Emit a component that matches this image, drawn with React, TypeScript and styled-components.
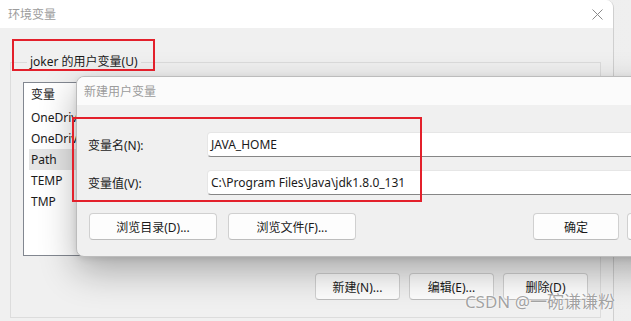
import styled, { createGlobalStyle } from "styled-components";

const GlobalStyle = createGlobalStyle`
  html, body {
    margin: 0;
    padding: 0;
    background: #ececec;
  }
  * {
    box-sizing: border-box;
  }
`;

const Page = styled.div`
  position: relative;
  width: 631px;
  height: 321px;
  overflow: hidden;
  display: flex;
  background: linear-gradient(90deg, #e2e2e2, #efefef);
  font-family: "Segoe UI", "Noto Sans", "Noto Sans CJK SC", sans-serif;
  font-size: 12px;
  color: #1a1a1a;
`;

const Window = styled.section`
  width: 614px;
  flex-shrink: 0;
  display: flex;
  flex-direction: column;
  background: #f0f0f0;
  border-right: 1px solid #cfcfcf;
  border-top-right-radius: 8px;
  overflow: hidden;
`;

const TitleBar = styled.header`
  height: 28px;
  flex-shrink: 0;
  display: flex;
  align-items: center;
  justify-content: space-between;
  padding: 0 10px 0 8px;
  background: #ffffff;
  color: #9c9c9c;
`;

const CloseIcon = () => (
  <svg width="11" height="11" viewBox="0 0 11 11">
    <path d="M0.5 0.5 L10.5 10.5 M10.5 0.5 L0.5 10.5" stroke="#8a8a8a" strokeWidth="1" fill="none" />
  </svg>
);

const WindowBody = styled.div`
  flex: 1;
  padding: 34px 12px 0 10px;
`;

const GroupFrame = styled.div`
  border: 1px solid #dcdcdc;
  padding: 0 12px 17px 12px;
`;

const GroupLabel = styled.div`
  width: fit-content;
  margin: -9px 0 0 4px;
  padding: 0 3px;
  line-height: 16px;
  background: #f0f0f0;
`;

const ListBox = styled.div`
  margin-top: 12px;
  height: 174px;
  border: 1px solid #828790;
  background: #ffffff;
  display: flex;
  flex-direction: column;
`;

const ListHeader = styled.div`
  height: 24px;
  line-height: 24px;
  padding-left: 7px;
`;

const ListRow = styled.div<{ $selected?: boolean }>`
  height: 21px;
  line-height: 21px;
  margin-left: 5px;
  padding-left: 2px;
  background: ${(p) => (p.$selected ? "#e5e5e5" : "transparent")};
`;

const ButtonRow = styled.div`
  margin-top: 17px;
  display: flex;
  justify-content: flex-end;
  gap: 9px;
`;

const Button = styled.button<{ $w: number }>`
  width: ${(p) => p.$w}px;
  height: 27px;
  padding: 0;
  border: 1px solid #d0d0d0;
  border-bottom-color: #bdbdbd;
  border-radius: 4px;
  background: #fdfdfd;
  font: inherit;
  color: #1a1a1a;
  flex-shrink: 0;
`;

const Dialog = styled.section`
  position: absolute;
  left: 76px;
  top: 76px;
  width: 650px;
  height: 181px;
  display: flex;
  flex-direction: column;
  background: #f0f0f0;
  border: 1px solid #bcbcbc;
  border-radius: 8px;
  overflow: hidden;
  box-shadow: 0 14px 36px rgba(0, 0, 0, 0.3), 0 2px 6px rgba(0, 0, 0, 0.1);
`;

const DialogTitle = styled.header`
  height: 28px;
  flex-shrink: 0;
  display: flex;
  align-items: center;
  padding-left: 7px;
  background: #fbfbfb;
  color: #9c9c9c;
`;

const DialogBody = styled.div`
  flex: 1;
  display: flex;
  flex-direction: column;
  padding: 27px 12px 0 11px;
`;

const FieldRow = styled.div`
  display: flex;
  align-items: center;
  & + & {
    margin-top: 13px;
  }
`;

const FieldLabel = styled.label`
  width: 119px;
  flex-shrink: 0;
`;

const TextInput = styled.div`
  flex: 1;
  height: 25px;
  display: flex;
  align-items: center;
  padding-left: 3px;
  background: #ffffff;
  border: 1px solid #e6e6e6;
  border-bottom: 1px solid #868686;
  border-radius: 4px;
`;

const DialogButtons = styled.div`
  margin-top: 18px;
  margin-left: 1px;
  display: flex;
  gap: 11px;
`;

const Spacer = styled.div`
  flex: 1;
`;

const EndButtons = styled.div`
  display: flex;
  gap: 8px;
`;

const Annotation = styled.div<{ $x: number; $y: number; $w: number; $h: number }>`
  position: absolute;
  left: ${(p) => p.$x}px;
  top: ${(p) => p.$y}px;
  width: ${(p) => p.$w}px;
  height: ${(p) => p.$h}px;
  border: 2px solid #e3202b;
  pointer-events: none;
`;

const Watermark = styled.div`
  position: absolute;
  right: 16px;
  bottom: 8px;
  font-family: "Noto Sans", "Noto Sans CJK SC", sans-serif;
  font-size: 17px;
  color: rgba(145, 145, 145, 0.85);
  text-shadow: 0 0 1px #fff, 0 0 2px #fff;
`;

export default function App() {
  return (
    <>
      <GlobalStyle />
      <Page>
        <Window>
          <TitleBar>
            <span>环境变量</span>
            <CloseIcon />
          </TitleBar>
          <WindowBody>
            <GroupFrame>
              <GroupLabel>joker 的用户变量(U)</GroupLabel>
              <ListBox>
                <ListHeader>变量</ListHeader>
                <ListRow>OneDrive</ListRow>
                <ListRow>OneDriveConsumer</ListRow>
                <ListRow $selected>Path</ListRow>
                <ListRow>TEMP</ListRow>
                <ListRow>TMP</ListRow>
              </ListBox>
              <ButtonRow>
                <Button $w={85}>新建(N)...</Button>
                <Button $w={85}>编辑(E)...</Button>
                <Button $w={85}>删除(D)</Button>
              </ButtonRow>
            </GroupFrame>
          </WindowBody>
        </Window>

        <Dialog>
          <DialogTitle>新建用户变量</DialogTitle>
          <DialogBody>
            <FieldRow>
              <FieldLabel>变量名(N):</FieldLabel>
              <TextInput>JAVA_HOME</TextInput>
            </FieldRow>
            <FieldRow>
              <FieldLabel>变量值(V):</FieldLabel>
              <TextInput>C:\Program Files\Java\jdk1.8.0_131</TextInput>
            </FieldRow>
            <DialogButtons>
              <Button $w={128}>浏览目录(D)...</Button>
              <Button $w={128}>浏览文件(F)...</Button>
              <Spacer />
              <EndButtons>
                <Button $w={86}>确定</Button>
                <Button $w={86}>取消</Button>
              </EndButtons>
            </DialogButtons>
          </DialogBody>
        </Dialog>

        <Annotation $x={12} $y={39} $w={143} $h={32} />
        <Annotation $x={72} $y={117} $w={350} $h={85} />
        <Watermark>CSDN @一碗谦谦粉</Watermark>
      </Page>
    </>
  );
}
